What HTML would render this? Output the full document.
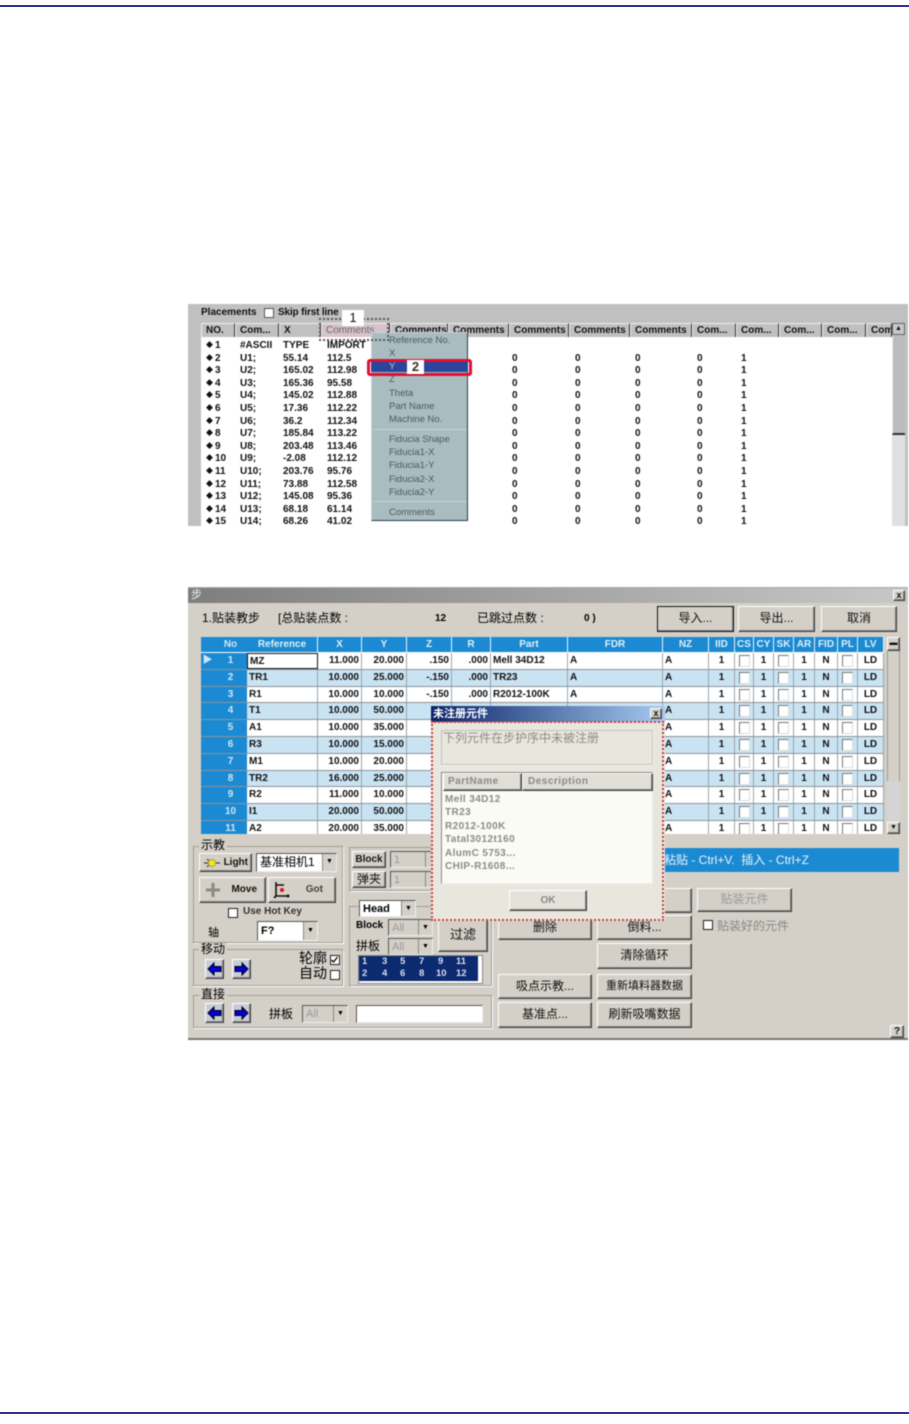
<!DOCTYPE html>
<html><head><meta charset="utf-8"><style>
html,body{margin:0;padding:0;background:#fff}
body{width:909px;height:1424px;position:relative;overflow:hidden;font:10px "Liberation Sans","Noto Sans CJK SC",sans-serif;color:#000}
div,span,b{box-sizing:border-box}
.a{position:absolute;white-space:nowrap}
.fig{position:absolute;overflow:hidden;filter:blur(.45px)}
.b{position:absolute;background:#d4d0c8;border:1px solid;border-color:#fff #404040 #404040 #fff;box-shadow:inset -1px -1px #808080;text-align:center;white-space:nowrap;font-size:12px;color:#111}
#f1{left:188px;top:304px;width:720px;height:222px;background:#c0c0c0;font-weight:bold;color:#111}
#f1 .h{position:absolute;top:19px;height:15px;background:#c0c0c0;border:1px solid;border-color:#eee #333 #333 #eee;font-size:10px;line-height:14px;padding-left:4px;overflow:hidden;white-space:nowrap}
#rows{position:absolute;left:13px;top:33px;width:691px;height:189px;background:#fff;padding-top:1px}
.r{position:relative;height:12.6px;line-height:14px;font-size:10px;top:1px}
.r b{position:absolute;top:0;white-space:nowrap}
.r s{text-decoration:none;font-size:7px;vertical-align:1px;margin-right:2px}
.c1{left:5px}.c2{left:39px}.c3{left:82px}.c4{left:126px}.c5{left:311px}.c6{left:374px}.c7{left:434px}.c8{left:496px}.c9{left:540px}
#menu{position:absolute;left:183px;top:28px;width:97px;height:189px;background:#a9bcc0;border:1px solid;border-color:#c8d4d8 #2c3a50 #2c3a50 #c8d4d8;font-weight:normal;color:#4a5a60;font-size:9.5px}
#menu span{position:absolute;left:17px;white-space:nowrap;margin-top:1px}
#f2{left:188px;top:587px;width:720px;height:453px;background:#d4d0c8;border-bottom:2px solid #777;border-top:1px solid #aaa}
.tb{position:absolute;left:13px;top:49px;width:683px;height:197px;overflow:hidden;background:#fff;font-weight:bold;font-size:10px;color:#111}
.tr{display:grid;grid-template-columns:14px 32px 71px 44px 45px 45px 39px 77px 95px 46px 26px 19px 20px 20px 21px 23px 20px 26px;height:16.8px;line-height:15.8px;border-bottom:1px solid #8a9299;background:#fff}
.tr.t{background:#c9e3f3}
.tr.hd{height:16px;background:#1b8ad2;color:#dfeff8;border-bottom:1px solid #fff;line-height:15px}
.tr span{text-align:center;overflow:hidden;white-space:nowrap;border-right:1px solid #9aa4aa}
.tr.hd span{border-right:1px solid #e8f4fa}
.tr span:nth-child(1),.tr span:nth-child(2){background:#1b8ad2;color:#cfe6f4;border-right:1px solid #1b8ad2}
.tr span:nth-child(3),.tr span:nth-child(8),.tr span:nth-child(9),.tr span:nth-child(10){text-align:left;padding-left:2px}
.tr span:nth-child(4),.tr span:nth-child(5),.tr span:nth-child(6),.tr span:nth-child(7){text-align:right;padding-right:2px}
.hd span:nth-child(n){text-align:center!important;padding:0!important}
.tr i{display:inline-block;width:9px;height:10px;border:1px solid;border-color:#777 #ddd #ddd #777;background:#fff;margin-top:2px;vertical-align:top}
.grp{position:absolute;border:1px solid #a09c94;box-shadow:1px 1px #fff}
.lbl{position:absolute;background:#d4d0c8;padding:0 2px;font-size:12px;line-height:13px;white-space:nowrap}
.cb{position:absolute;background:#fff;border:1px solid;border-color:#555 #eee #eee #555;font-size:11px;font-weight:bold;line-height:16px;padding-left:3px;white-space:nowrap;overflow:hidden}
.cb.d{background:#d4d0c8;color:#999;font-weight:normal}
.cb em{position:absolute;right:0;top:0;bottom:0;width:13px;background:#d4d0c8;border-left:1px solid #888;font-style:normal;font-size:7px;text-align:center;color:#000;line-height:16px}
.ar{position:absolute;width:19px;height:20px;background:#c8ccd8;border:1px solid;border-color:#fff #404040 #404040 #fff;box-shadow:inset -1px -1px #808080}
.ar svg{position:absolute;left:1px;top:2px;width:15px;height:14px}
.ck{position:absolute;width:10px;height:10px;background:#fff;border:1.5px solid #222}
#dlg{position:absolute;left:243px;top:118px;width:234px;height:215px;background:#e8e6dd}
#dlg .ttl{position:absolute;left:0;top:0;width:100%;height:16px;background:linear-gradient(90deg,#0a246a,#a6caf0);color:#fff;font-size:11px;font-weight:bold;line-height:16px;padding-left:2px}
#dlg .dots{position:absolute;left:0;top:15px;width:233px;height:200px;border:2px dotted #c8403f}
#dlg .txt{color:#8c8c86}
</style></head><body>
<div class="a" style="left:0;top:5px;width:909px;height:2px;background:#34348c"></div>
<div class="a" style="left:0;top:1412px;width:909px;height:2px;background:#34348c"></div>

<div id="f1" class="fig">
<span class="a" style="left:13px;top:3px;font-size:10px">Placements</span>
<span class="a" style="left:76px;top:4px;width:10px;height:10px;background:#fff;border:1px solid #555"></span>
<span class="a" style="left:90px;top:3px;font-size:10px;letter-spacing:-.15px">Skip first line</span>
<div class="h" style="left:13px;width:34px">NO.</div>
<div class="h" style="left:47px;width:44px">Com...</div>
<div class="h" style="left:91px;width:42px">X</div>
<div class="h" style="left:133px;width:69px;background:#d8c2ca;color:#666;font-weight:normal">Comments</div>
<div class="h" style="left:202px;width:58px">Comments</div>
<div class="h" style="left:260px;width:61px">Comments</div>
<div class="h" style="left:321px;width:60px">Comments</div>
<div class="h" style="left:381px;width:61px">Comments</div>
<div class="h" style="left:442px;width:62px">Comments</div>
<div class="h" style="left:504px;width:44px">Com...</div>
<div class="h" style="left:548px;width:43px">Com...</div>
<div class="h" style="left:591px;width:43px">Com...</div>
<div class="h" style="left:634px;width:44px">Com...</div>
<div class="h" style="left:678px;width:26px">Com</div>
<div id="rows">
<div class="r"><b class="c1"><s>◆</s>1</b><b class="c2">#ASCII</b><b class="c3">TYPE</b><b class="c4">IMPORT</b></div>
<div class="r"><b class="c1"><s>◆</s>2</b><b class="c2">U1;</b><b class="c3">55.14</b><b class="c4">112.5</b><b class="c5">0</b><b class="c6">0</b><b class="c7">0</b><b class="c8">0</b><b class="c9">1</b></div>
<div class="r"><b class="c1"><s>◆</s>3</b><b class="c2">U2;</b><b class="c3">165.02</b><b class="c4">112.98</b><b class="c5">0</b><b class="c6">0</b><b class="c7">0</b><b class="c8">0</b><b class="c9">1</b></div>
<div class="r"><b class="c1"><s>◆</s>4</b><b class="c2">U3;</b><b class="c3">165.36</b><b class="c4">95.58</b><b class="c5">0</b><b class="c6">0</b><b class="c7">0</b><b class="c8">0</b><b class="c9">1</b></div>
<div class="r"><b class="c1"><s>◆</s>5</b><b class="c2">U4;</b><b class="c3">145.02</b><b class="c4">112.88</b><b class="c5">0</b><b class="c6">0</b><b class="c7">0</b><b class="c8">0</b><b class="c9">1</b></div>
<div class="r"><b class="c1"><s>◆</s>6</b><b class="c2">U5;</b><b class="c3">17.36</b><b class="c4">112.22</b><b class="c5">0</b><b class="c6">0</b><b class="c7">0</b><b class="c8">0</b><b class="c9">1</b></div>
<div class="r"><b class="c1"><s>◆</s>7</b><b class="c2">U6;</b><b class="c3">36.2</b><b class="c4">112.34</b><b class="c5">0</b><b class="c6">0</b><b class="c7">0</b><b class="c8">0</b><b class="c9">1</b></div>
<div class="r"><b class="c1"><s>◆</s>8</b><b class="c2">U7;</b><b class="c3">185.84</b><b class="c4">113.22</b><b class="c5">0</b><b class="c6">0</b><b class="c7">0</b><b class="c8">0</b><b class="c9">1</b></div>
<div class="r"><b class="c1"><s>◆</s>9</b><b class="c2">U8;</b><b class="c3">203.48</b><b class="c4">113.46</b><b class="c5">0</b><b class="c6">0</b><b class="c7">0</b><b class="c8">0</b><b class="c9">1</b></div>
<div class="r"><b class="c1"><s>◆</s>10</b><b class="c2">U9;</b><b class="c3">-2.08</b><b class="c4">112.12</b><b class="c5">0</b><b class="c6">0</b><b class="c7">0</b><b class="c8">0</b><b class="c9">1</b></div>
<div class="r"><b class="c1"><s>◆</s>11</b><b class="c2">U10;</b><b class="c3">203.76</b><b class="c4">95.76</b><b class="c5">0</b><b class="c6">0</b><b class="c7">0</b><b class="c8">0</b><b class="c9">1</b></div>
<div class="r"><b class="c1"><s>◆</s>12</b><b class="c2">U11;</b><b class="c3">73.88</b><b class="c4">112.58</b><b class="c5">0</b><b class="c6">0</b><b class="c7">0</b><b class="c8">0</b><b class="c9">1</b></div>
<div class="r"><b class="c1"><s>◆</s>13</b><b class="c2">U12;</b><b class="c3">145.08</b><b class="c4">95.36</b><b class="c5">0</b><b class="c6">0</b><b class="c7">0</b><b class="c8">0</b><b class="c9">1</b></div>
<div class="r"><b class="c1"><s>◆</s>14</b><b class="c2">U13;</b><b class="c3">68.18</b><b class="c4">61.14</b><b class="c5">0</b><b class="c6">0</b><b class="c7">0</b><b class="c8">0</b><b class="c9">1</b></div>
<div class="r"><b class="c1"><s>◆</s>15</b><b class="c2">U14;</b><b class="c3">68.26</b><b class="c4">41.02</b><b class="c5">0</b><b class="c6">0</b><b class="c7">0</b><b class="c8">0</b><b class="c9">1</b></div>
</div>
<div class="a" style="left:704px;top:19px;width:13px;height:203px;background:#e0e0e0"></div>
<div class="a" style="left:704px;top:19px;width:13px;height:12px;background:#c8c8c8;border:1px solid #666;font-size:7px;line-height:10px;text-align:center">▲</div>
<div class="a" style="left:704px;top:31px;width:13px;height:100px;background:#bcbcbc;border-bottom:2px solid #333;border-left:1px solid #eee"></div>
<div id="menu">
<span style="top:1px">Reference No.</span>
<span style="top:14px">X</span>
<div class="a" style="left:-1px;top:27px;width:97px;height:12px;background:#2a469c"></div>
<span style="top:27px;color:#b8c8e0">Y</span>
<span style="top:40px">Z</span>
<span style="top:54px">Theta</span>
<span style="top:67px">Part Name</span>
<span style="top:80px">Machine No.</span>
<div class="a" style="left:2px;top:96px;width:92px;height:1px;background:#c8d8da"></div>
<span style="top:100px">Fiducia Shape</span>
<span style="top:113px">Fiducia1-X</span>
<span style="top:126px">Fiducia1-Y</span>
<span style="top:140px">Fiducia2-X</span>
<span style="top:153px">Fiducia2-Y</span>
<div class="a" style="left:2px;top:168px;width:92px;height:1px;background:#c8d8da"></div>
<span style="top:173px">Comments</span>
</div>
<div class="a" style="left:131px;top:14px;width:70px;height:23px;border:2px dotted #555"></div>
<div class="a" style="left:179px;top:55px;width:105px;height:17px;border:3px solid #e01030;border-radius:3px"></div>
<div class="a" style="left:154px;top:6px;width:22px;height:16px;background:#fff;text-align:center;font:13px/16px 'Liberation Sans';color:#111">1</div>
<div class="a" style="left:219px;top:56px;width:17px;height:14px;background:#fff;text-align:center;font:bold 13px/14px 'Liberation Sans';color:#333">2</div>
</div>

<div id="f2" class="fig">
<div class="a" style="left:0;top:0;width:720px;height:15px;background:linear-gradient(90deg,#7e7e7e,#c8c8c8);color:#eee;font-size:11px;line-height:15px;padding-left:3px">步</div>
<div class="b" style="left:705px;top:2px;width:12px;height:11px;font:bold 9px/9px 'Liberation Sans'">x</div>
<span class="a" style="left:14px;top:23px;font-size:12px;line-height:15px">1.贴装教步</span>
<span class="a" style="left:90px;top:23px;font-size:12px;line-height:15px">[总贴装点数 :</span>
<b class="a" style="left:247px;top:24px;font-size:10px;line-height:14px">12</b>
<span class="a" style="left:289px;top:23px;font-size:12px;line-height:15px">已跳过点数 :</span>
<b class="a" style="left:396px;top:24px;font-size:10px;line-height:14px">0 )</b>
<div class="b" style="left:469px;top:18px;width:77px;height:26px;line-height:23px;border:1px solid #111;box-shadow:inset -1px -1px #808080">导入...</div>
<div class="b" style="left:550px;top:18px;width:77px;height:26px;line-height:23px">导出...</div>
<div class="b" style="left:633px;top:18px;width:76px;height:26px;line-height:23px">取消</div>
<div class="tb">
<div class="tr hd"><span></span><span>No</span><span>Reference</span><span>X</span><span>Y</span><span>Z</span><span>R</span><span>Part</span><span>FDR</span><span>NZ</span><span>IID</span><span>CS</span><span>CY</span><span>SK</span><span>AR</span><span>FID</span><span>PL</span><span>LV</span></div>
<div class="tr"><span>▶</span><span>1</span><span style="border:1.5px solid #111">MZ</span><span>11.000</span><span>20.000</span><span>.150</span><span>.000</span><span>Mell 34D12</span><span>A</span><span>A</span><span>1</span><span><i></i></span><span>1</span><span><i></i></span><span>1</span><span>N</span><span><i></i></span><span>LD</span></div>
<div class="tr t"><span></span><span>2</span><span>TR1</span><span>10.000</span><span>25.000</span><span>-.150</span><span>.000</span><span>TR23</span><span>A</span><span>A</span><span>1</span><span><i></i></span><span>1</span><span><i></i></span><span>1</span><span>N</span><span><i></i></span><span>LD</span></div>
<div class="tr"><span></span><span>3</span><span>R1</span><span>10.000</span><span>10.000</span><span>-.150</span><span>.000</span><span>R2012-100K</span><span>A</span><span>A</span><span>1</span><span><i></i></span><span>1</span><span><i></i></span><span>1</span><span>N</span><span><i></i></span><span>LD</span></div>
<div class="tr t"><span></span><span>4</span><span>T1</span><span>10.000</span><span>50.000</span><span></span><span></span><span></span><span></span><span>A</span><span>1</span><span><i></i></span><span>1</span><span><i></i></span><span>1</span><span>N</span><span><i></i></span><span>LD</span></div>
<div class="tr"><span></span><span>5</span><span>A1</span><span>10.000</span><span>35.000</span><span></span><span></span><span></span><span></span><span>A</span><span>1</span><span><i></i></span><span>1</span><span><i></i></span><span>1</span><span>N</span><span><i></i></span><span>LD</span></div>
<div class="tr t"><span></span><span>6</span><span>R3</span><span>10.000</span><span>15.000</span><span></span><span></span><span></span><span></span><span>A</span><span>1</span><span><i></i></span><span>1</span><span><i></i></span><span>1</span><span>N</span><span><i></i></span><span>LD</span></div>
<div class="tr"><span></span><span>7</span><span>M1</span><span>10.000</span><span>20.000</span><span></span><span></span><span></span><span></span><span>A</span><span>1</span><span><i></i></span><span>1</span><span><i></i></span><span>1</span><span>N</span><span><i></i></span><span>LD</span></div>
<div class="tr t"><span></span><span>8</span><span>TR2</span><span>16.000</span><span>25.000</span><span></span><span></span><span></span><span></span><span>A</span><span>1</span><span><i></i></span><span>1</span><span><i></i></span><span>1</span><span>N</span><span><i></i></span><span>LD</span></div>
<div class="tr"><span></span><span>9</span><span>R2</span><span>11.000</span><span>10.000</span><span></span><span></span><span></span><span></span><span>A</span><span>1</span><span><i></i></span><span>1</span><span><i></i></span><span>1</span><span>N</span><span><i></i></span><span>LD</span></div>
<div class="tr t"><span></span><span>10</span><span>I1</span><span>20.000</span><span>50.000</span><span></span><span></span><span></span><span></span><span>A</span><span>1</span><span><i></i></span><span>1</span><span><i></i></span><span>1</span><span>N</span><span><i></i></span><span>LD</span></div>
<div class="tr"><span></span><span>11</span><span>A2</span><span>20.000</span><span>35.000</span><span></span><span></span><span></span><span></span><span>A</span><span>1</span><span><i></i></span><span>1</span><span><i></i></span><span>1</span><span>N</span><span><i></i></span><span>LD</span></div>
</div>
<div class="a" style="left:699px;top:49px;width:13px;height:197px;background:#d4d0c8;border:1px solid #999"></div>
<div class="b" style="left:699px;top:49px;width:13px;height:14px;font:8px/10px 'Liberation Sans'">▬</div>
<div class="a" style="left:699px;top:193px;width:13px;height:41px;background:repeating-conic-gradient(#bbb 0 25%,#eee 0 50%) 0 0/2px 2px"></div>
<div class="b" style="left:699px;top:234px;width:13px;height:12px;font:7px/9px 'Liberation Sans'">▼</div>

<div class="a" style="left:476px;top:260px;width:235px;height:24px;background:#1b8ad2;color:#e8f4fb;font-size:12px;line-height:24px;white-space:nowrap">粘贴 - Ctrl+V.&nbsp; 插入 - Ctrl+Z</div>

<div class="grp" style="left:5px;top:258px;width:150px;height:97px"></div>
<span class="lbl" style="left:11px;top:251px">示教</span>
<div class="b" style="left:11px;top:265px;width:53px;height:19px;font:bold 10px/17px 'Liberation Sans';text-align:right;padding-right:3px">Light
<svg class="a" style="left:4px;top:3px" width="16" height="12" viewBox="0 0 16 12"><path d="M0 6h4M12 6h4M3 2l2 2M3 10l2-2" stroke="#444" stroke-width="1.2" fill="none"/><circle cx="8" cy="6" r="3.6" fill="#f4e800" stroke="#777" stroke-width=".6"/></svg></div>
<div class="cb" style="left:68px;top:265px;width:81px;height:19px;font:12px/17px 'Liberation Sans','Noto Sans CJK SC'">基准相机1<em>▼</em></div>
<div class="b" style="left:11px;top:289px;width:67px;height:26px;font:bold 10px/24px 'Liberation Sans';text-align:right;padding-right:8px">Move
<svg class="a" style="left:5px;top:4px" width="16" height="16" viewBox="0 0 16 16"><path d="M6.5 1h3v5.5H15v3H9.500V15h-3V9.500H1v-3h5.500z" fill="#8a8a86"/></svg></div>
<div class="b" style="left:80px;top:289px;width:68px;height:26px;font:bold 10px/24px 'Liberation Sans';text-align:right;padding-right:12px;color:#444">Got
<svg class="a" style="left:4px;top:3px" width="18" height="18" viewBox="0 0 18 18"><path d="M3 1v14h13M3 4h8M3 15l-2 2" stroke="#111" stroke-width="1.6" fill="none"/><circle cx="9" cy="9" r="2" fill="#e01010"/><circle cx="15" cy="15" r="1.500" fill="#111"/></svg></div>
<span class="ck" style="left:40px;top:320px"></span>
<b class="a" style="left:55px;top:318px;font-size:10px;color:#333">Use Hot Key</b>
<span class="a" style="left:20px;top:336px;font-size:11px">轴</span>
<div class="cb" style="left:69px;top:333px;width:61px;height:20px;line-height:18px">F?<em style="line-height:18px">▼</em></div>

<div class="grp" style="left:5px;top:361px;width:150px;height:37px"></div>
<span class="lbl" style="left:11px;top:355px">移动</span>
<div class="ar" style="left:17px;top:371px"><svg viewBox="0 0 15 14"><path d="M1 7l6-6v3.500h7v5H7V13z" fill="#0000e0" stroke="#000" stroke-width="1"/></svg></div>
<div class="ar" style="left:44px;top:371px"><svg viewBox="0 0 15 14"><path d="M14 7L8 1v3.500H1v5h7V13z" fill="#0000e0" stroke="#000" stroke-width="1"/></svg></div>
<span class="a" style="left:111px;top:362px;font-size:14px;line-height:16px">轮廓</span>
<span class="ck" style="left:142px;top:367px"><svg class="a" style="left:0;top:0" width="7" height="7" viewBox="0 0 7 7"><path d="M.5 4l2 2 4-5" stroke="#111" stroke-width="1.4" fill="none"/></svg></span>
<span class="a" style="left:111px;top:377px;font-size:14px;line-height:16px">自动</span>
<span class="ck" style="left:142px;top:382px"></span>

<div class="grp" style="left:5px;top:407px;width:299px;height:33px"></div>
<span class="lbl" style="left:11px;top:400px">直接</span>
<div class="ar" style="left:17px;top:415px"><svg viewBox="0 0 15 14"><path d="M1 7l6-6v3.500h7v5H7V13z" fill="#0000e0" stroke="#000" stroke-width="1"/></svg></div>
<div class="ar" style="left:44px;top:415px"><svg viewBox="0 0 15 14"><path d="M14 7L8 1v3.500H1v5h7V13z" fill="#0000e0" stroke="#000" stroke-width="1"/></svg></div>
<span class="a" style="left:81px;top:417px;font-size:12px">拼板</span>
<div class="cb d" style="left:114px;top:417px;width:46px;height:18px">All<em>▼</em></div>
<div class="cb" style="left:168px;top:417px;width:127px;height:18px"></div>

<div class="grp" style="left:161px;top:259px;width:131px;height:44px"></div>
<div class="b" style="left:164px;top:263px;width:34px;height:17px;font:bold 10px/15px 'Liberation Sans'">Block</div>
<div class="cb d" style="left:202px;top:263px;width:50px;height:17px">1<em>▼</em></div>
<div class="b" style="left:164px;top:283px;width:34px;height:17px;line-height:15px">弹夹</div>
<div class="cb d" style="left:202px;top:283px;width:50px;height:17px">1<em>▼</em></div>

<div class="grp" style="left:161px;top:318px;width:143px;height:80px"></div>
<div class="cb" style="left:171px;top:312px;width:57px;height:17px;background:#fff">Head<em>▼</em></div>
<b class="a" style="left:168px;top:332px;font-size:10px">Block</b>
<div class="cb d" style="left:200px;top:331px;width:45px;height:17px">All<em>▼</em></div>
<span class="a" style="left:168px;top:349px;font-size:12px">拼板</span>
<div class="cb d" style="left:200px;top:350px;width:45px;height:17px">All<em>▼</em></div>
<div class="b" style="left:250px;top:331px;width:50px;height:33px;line-height:30px;font-size:13px">过滤</div>
<div class="a" style="left:170px;top:367px;width:125px;height:29px;background:#fff;border:1px solid #888"></div>
<div class="a" style="left:171px;top:368px;width:119px;height:25px;background:#0c2a70;color:#dde;font:bold 9.5px/12px 'Liberation Sans'">
<span class="a" style="left:3px;top:0">1</span><span class="a" style="left:23px;top:0">3</span><span class="a" style="left:41px;top:0">5</span><span class="a" style="left:60px;top:0">7</span><span class="a" style="left:79px;top:0">9</span><span class="a" style="left:97px;top:0">11</span>
<span class="a" style="left:3px;top:12px">2</span><span class="a" style="left:23px;top:12px">4</span><span class="a" style="left:41px;top:12px">6</span><span class="a" style="left:60px;top:12px">8</span><span class="a" style="left:77px;top:12px">10</span><span class="a" style="left:97px;top:12px">12</span></div>

<div class="b" style="left:409px;top:300px;width:95px;height:25px"></div>
<div class="b" style="left:310px;top:327px;width:94px;height:25px;line-height:22px">删除</div>
<div class="b" style="left:409px;top:327px;width:95px;height:25px;line-height:22px">倒料...</div>
<div class="b" style="left:509px;top:300px;width:95px;height:24px;line-height:21px;color:#999">贴装元件</div>
<span class="ck" style="left:515px;top:332px"></span>
<span class="a" style="left:529px;top:329px;font-size:12px;color:#888">贴装好的元件</span>
<div class="b" style="left:409px;top:355px;width:95px;height:26px;line-height:23px">清除循环</div>
<div class="b" style="left:310px;top:386px;width:94px;height:25px;line-height:22px">吸点示教...</div>
<div class="b" style="left:409px;top:386px;width:95px;height:25px;line-height:22px;font-size:11px;overflow:hidden">重新填料器数据</div>
<div class="b" style="left:310px;top:414px;width:94px;height:26px;line-height:23px">基准点...</div>
<div class="b" style="left:409px;top:414px;width:95px;height:26px;line-height:23px">刷新吸嘴数据</div>
<div class="b" style="left:702px;top:437px;width:14px;height:13px;font:bold 10px/11px 'Liberation Sans'">?</div>

<div id="dlg">
<div class="ttl">未注册元件</div>
<div class="b" style="left:219px;top:2px;width:12px;height:11px;font:bold 9px/9px 'Liberation Sans';background:#d4d0c8">x</div>
<div class="a" style="left:10px;top:24px;width:212px;height:35px;border:1px solid #c4c2ba;box-shadow:1px 1px #f4f3ee"></div>
<span class="a txt" style="left:12px;top:25px;font-size:12px;line-height:14px">下列元件在步护序中未被注册</span>
<div class="a" style="left:10px;top:66px;width:212px;height:112px;background:#fbfbf6;border:1px solid;border-color:#888 #eee #eee #888"></div>
<div class="b" style="left:12px;top:67px;width:79px;height:18px;background:#e0ded5;font:bold 10px/16px 'Liberation Sans';color:#888;text-align:left;padding-left:4px;letter-spacing:.5px">PartName</div>
<div class="b" style="left:91px;top:67px;width:131px;height:18px;background:#e0ded5;font:bold 10px/16px 'Liberation Sans';color:#888;text-align:left;padding-left:5px;letter-spacing:.5px">Description</div>
<div class="a txt" style="left:14px;top:87px;font:bold 10px/13.4px 'Liberation Sans';letter-spacing:.4px;white-space:pre">Mell 34D12
TR23
R2012-100K
Tatal3012t160
AlumC 5753...
CHIP-R1608...</div>
<div class="b" style="left:78px;top:184px;width:78px;height:21px;background:#e4e2d9;font:bold 10px/19px 'Liberation Sans';color:#888">OK</div>
<div class="dots"></div>
</div>
</div>
</body></html>
